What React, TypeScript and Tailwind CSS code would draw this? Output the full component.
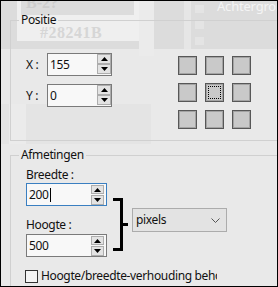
import React from "react";

function Tri({ down = false }: { down?: boolean }) {
  return (
    <svg width="7" height="4" viewBox="0 0 7 4" className="block">
      {down ? <path d="M0 0 L7 0 L3.5 4 Z" fill="#000" /> : <path d="M0 4 L3.5 0 L7 4 Z" fill="#000" />}
    </svg>
  );
}

function SpinBtn({ down = false, h = "h-[10px]", w = "w-[14px]" }: { down?: boolean; h?: string; w?: string }) {
  return (
    <div className={`${w} ${h} flex items-center justify-center border border-[#adadad] bg-[#e3e3e3]`}>
      <Tri down={down} />
    </div>
  );
}

function PosInput({ value }: { value: string }) {
  return (
    <div className="flex h-[23px] w-[65px] items-stretch border border-[#7a7a7a] bg-[#f8f8f8]">
      <div className="flex flex-1 items-center pl-[2px] text-[12px] leading-none text-[#111]">{value}</div>
      <div className="flex flex-col">
        <SpinBtn />
        <SpinBtn down />
      </div>
    </div>
  );
}

function SizeInput({ value, focused = false }: { value: string; focused?: boolean }) {
  return (
    <div
      className={`flex h-[23px] w-[81px] items-stretch border bg-[#f8f8f8] ${
        focused ? "border-[#3a7fc1]" : "border-[#7a7a7a]"
      }`}
    >
      <div className="flex flex-1 items-center pl-[2px] text-[12px] leading-none text-[#111]">
        {value}
        {focused && <span className="ml-[1px] block h-[14px] w-px bg-black" />}
      </div>
      <div className="mr-[2px] flex flex-col gap-[1px] pt-[1px]">
        <SpinBtn h="h-[9px]" w="w-[13px]" />
        <SpinBtn down h="h-[10px]" w="w-[13px]" />
      </div>
    </div>
  );
}

function Square({ focus = false }: { focus?: boolean }) {
  return (
    <div className="h-[19px] w-[19px] border border-[#575757] bg-[#c9c9c9] shadow-[inset_0_0_0_1px_#a3a3a3]">
      {focus && <div className="m-[2px] h-[13px] w-[13px] border border-dotted border-black" />}
    </div>
  );
}

export default function App() {
  return (
    <div className="relative h-[287px] w-[278px] overflow-hidden border border-black bg-[#e9e9e9] font-['Segoe_UI','Noto_Sans',sans-serif] text-[12px] tracking-[-0.35px] text-[#111]">
      {/* faded window showing through behind the dialog */}
      <div className="pointer-events-none absolute inset-0">
        <div className="absolute left-0 top-0 h-[48px] w-[278px] bg-[#dcdcdc]" />
        <div className="absolute left-[16px] top-0 h-[40px] w-[122px] bg-[#efefef]" />
        <div className="absolute left-[20px] top-0 h-[14px] w-[113px] bg-[#dcdcdc]" />
        <div className="absolute left-[138px] top-0 h-[55px] w-[15px] bg-[#ebebeb]" />
        <div className="absolute left-[183px] top-0 h-[48px] w-[7px] bg-[#e6e6e6]" />
        <div className="absolute left-[194px] top-[4px] h-[8px] w-[9px] bg-[#e4e4e4]" />
        <div className="absolute left-[194px] top-[20px] h-[8px] w-[9px] bg-[#e4e4e4]" />
        <div className="absolute left-[194px] top-[36px] h-[8px] w-[9px] bg-[#e4e4e4]" />
        <div className="absolute left-0 top-[103px] h-[40px] w-[150px] bg-[#e4e4e4]" />
        <div className="absolute left-[8px] top-[103px] h-[40px] w-[17px] bg-[#ebebeb]" />
        <span className="absolute left-[25px] top-[-10px] font-['Liberation_Serif',serif] text-[16px] font-bold tracking-normal text-[#cdcdcd]">
          B-2?
        </span>
        <span className="absolute left-[39px] top-[20px] font-['Liberation_Serif',serif] text-[16px] font-bold tracking-[0.5px] text-[#d6d6d6]">
          #28241B
        </span>
        <span className="absolute left-[216px] top-[-4px] font-['Noto_Sans',sans-serif] text-[13px] tracking-[-0.2px] text-[#f4f4f4]">
          Achtergron
        </span>
      </div>

      <div className="relative">
        {/* Positie */}
        <fieldset className="ml-[9px] mt-[11px] h-[129px] w-[290px] border border-[#d0d0d0] px-[8px]">
          <legend className="px-[2px] leading-[16px]">Positie</legend>
          <div className="flex pl-[7px] pt-[25px]">
            <div className="flex flex-col gap-[8px]">
              <div className="flex items-center">
                <span className="w-[21px]">X :</span>
                <PosInput value="155" />
              </div>
              <div className="flex items-center">
                <span className="w-[21px]">Y :</span>
                <PosInput value="0" />
              </div>
            </div>
            <div className="ml-[66px] mt-[3px] grid grid-cols-[19px_19px_19px] gap-[8px]">
              <Square />
              <Square />
              <Square />
              <Square />
              <Square focus />
              <Square />
              <Square />
              <Square />
              <Square />
            </div>
          </div>
        </fieldset>

        {/* Afmetingen */}
        <fieldset className="ml-[9px] mt-[6px] h-[170px] w-[290px] border border-[#d0d0d0] px-[8px]">
          <legend className="px-[2px] leading-[16px]">Afmetingen</legend>
          <div className="flex pl-[7px] pt-[4px]">
            <div className="flex flex-col">
              <span className="leading-[16px]">Breedte :</span>
              <div className="mt-[0px]">
                <SizeInput value="200" focused />
              </div>
              <span className="mt-[11px] leading-[16px]">Hoogte :</span>
              <div className="mt-[1px]">
                <SizeInput value="500" />
              </div>
            </div>
            <div className="ml-[6px] mt-[25px] flex items-center">
              <div className="h-[53px] w-[10px] border-y-[3px] border-r-[3px] border-black" />
              <div className="h-[3px] w-[5px] bg-black" />
            </div>
            <div className="ml-[4px] mt-[41px] flex h-[24px] w-[95px] items-center justify-between border border-[#acacac] bg-[#e3e3e3] pl-[3px] pr-[6px]">
              <span className="leading-none">pixels</span>
              <svg width="9" height="5" viewBox="0 0 9 5">
                <path d="M0.5 0.5 L4.5 4.5 L8.5 0.5" fill="none" stroke="#555" strokeWidth="1" />
              </svg>
            </div>
          </div>
          <div className="mt-[11px] flex items-center pl-[6px]">
            <div className="h-[13px] w-[13px] border border-[#333] bg-[#f4f4f4]" />
            <span className="ml-[3px] w-[176px] overflow-hidden whitespace-nowrap leading-[16px]">
              Hoogte/breedte-verhouding behouden
            </span>
          </div>
        </fieldset>
      </div>
    </div>
  );
}
